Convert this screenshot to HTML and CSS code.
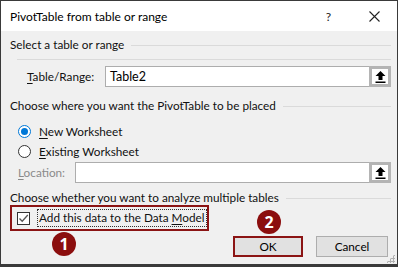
FILE: index.html
```html
<!DOCTYPE html>
<html lang="en">
<head>
    <meta charset="UTF-8">
    <title>PivotTable from table or range</title>
    <link rel="stylesheet" href="styles.css">
</head>
<body>
    <div class="dialog">
        <div class="titlebar">
            <span class="title">PivotTable from table or range</span>
            <span class="help">?</span>
            <svg class="close" width="11" height="11" viewBox="0 0 11 11">
                <path d="M0.5 0.5 L10.5 10.5 M10.5 0.5 L0.5 10.5" stroke="#222" stroke-width="1.1" fill="none"/>
            </svg>
        </div>

        <div class="content">
            <div class="group-head"><span>Select a table or range</span><i class="rule"></i></div>
            <div class="sep"></div>

            <div class="field-row range-row">
                <label class="field-label"><u>T</u>able/Range:</label>
                <div class="field">
                    <div class="input">Table2</div>
                    <div class="pick">
                        <svg width="11" height="12" viewBox="0 0 11 12"><path d="M5.5 0 L10.5 5 L7.5 5 L7.5 9 L3.5 9 L3.5 5 L0.5 5 Z M0.5 10.5 L10.5 10.5 L10.5 12 L0.5 12 Z" fill="#000"/></svg>
                    </div>
                </div>
            </div>

            <div class="group-head"><span>Choose where you want the PivotTable to be placed</span><i class="rule"></i></div>

            <div class="radio-row first">
                <span class="radio checked"></span>
                <span><u>N</u>ew Worksheet</span>
            </div>
            <div class="radio-row">
                <span class="radio"></span>
                <span><u>E</u>xisting Worksheet</span>
            </div>

            <div class="field-row loc-row">
                <label class="field-label disabled"><u>L</u>ocation:</label>
                <div class="field">
                    <div class="input"></div>
                    <div class="pick">
                        <svg width="11" height="12" viewBox="0 0 11 12"><path d="M5.5 0 L10.5 5 L7.5 5 L7.5 9 L3.5 9 L3.5 5 L0.5 5 Z M0.5 10.5 L10.5 10.5 L10.5 12 L0.5 12 Z" fill="#000"/></svg>
                    </div>
                </div>
            </div>

            <div class="group-head"><span>Choose whether you want to analyze multiple tables</span><i class="rule"></i></div>

            <div class="check-area">
                <div class="highlight check-box-wrap">
                    <span class="checkbox">
                        <svg width="11" height="11" viewBox="0 0 11 11"><path d="M1.5 5.5 L4.2 8.3 L9.8 2" stroke="#555" stroke-width="1.3" fill="none"/></svg>
                    </span>
                    <span class="focus-label">Add this data to the Data <u>M</u>odel</span>
                </div>
                <span class="badge badge-1">1</span>
            </div>

            <div class="buttons">
                <div class="btn ok">OK</div>
                <div class="btn">Cancel</div>
                <span class="badge badge-2">2</span>
            </div>
            <div class="grip"></div>
        </div>
    </div>
</body>
</html>
```

FILE: styles.css
```css
* {
    box-sizing: border-box;
}
body {
    margin: 0;
    background: #fff;
    font-family: 'Lato', 'Noto Sans', sans-serif;
    font-size: 11.75px;
    color: #111;
}
u {
    text-decoration: underline;
    text-underline-offset: 2px;
}
.dialog {
    width: 398px;
    height: 267px;
    border: 1px solid #3a3a3a;
    border-bottom-width: 3px;
    display: flex;
    flex-direction: column;
    background: #f0f0f0;
}
.titlebar {
    height: 30px;
    background: #fff;
    display: flex;
    align-items: center;
    padding-left: 9px;
}
.title {
    font-size: 12px;
    flex: 1;
    color: #000;
}
.help {
    font-size: 12px;
    margin-right: 38px;
    color: #222;
}
.close {
    margin-right: 17px;
}
.content {
    flex: 1;
    position: relative;
    padding: 6px 6px 0 9px;
    white-space: nowrap;
}
.group-head {
    display: flex;
    align-items: center;
    height: 16px;
    line-height: 16px;
}
.rule {
    flex: 1;
    height: 1px;
    background: #dadada;
    margin-left: 7px;
}
.sep {
    height: 1px;
    background: #dadada;
    margin: 6px 0 0 7px;
}
.field-row {
    display: flex;
    align-items: center;
    height: 21px;
}
.range-row {
    margin: 6px 0 11px 17px;
}
.loc-row {
    margin: 1px 0 7px 8px;
}
.field-label {
    width: 78px;
}
.loc-row .field-label {
    width: 57px;
}
.disabled {
    color: #8a8a8a;
}
.field {
    flex: 1;
    display: flex;
    height: 21px;
}
.input {
    flex: 1;
    background: #fff;
    border: 1px solid #adadad;
    border-right: none;
    padding-left: 4px;
    line-height: 19px;
    font-size: 12.5px;
    color: #000;
}
.pick {
    width: 22px;
    border: 3px solid #b4b4b4;
    background: #fff;
    display: flex;
    align-items: center;
    justify-content: center;
}
.radio-row {
    display: flex;
    align-items: center;
    gap: 8px;
    height: 20px;
    margin-left: 8px;
}
.radio-row.first {
    margin-top: 7px;
}
.radio {
    width: 13px;
    height: 13px;
    border: 1px solid #333;
    border-radius: 50%;
    background: #fff;
    position: relative;
}
.radio.checked {
    border-color: #0078d7;
}
.radio.checked::after {
    content: '';
    position: absolute;
    left: 2px;
    top: 2px;
    width: 7px;
    height: 7px;
    border-radius: 50%;
    background: #0078d7;
}
.check-area {
    position: relative;
    height: 30px;
}
.highlight {
    border: 2px solid #8b1414;
}
.check-box-wrap {
    display: inline-flex;
    align-items: center;
    gap: 7px;
    width: 199px;
    height: 26px;
    padding-left: 5px;
    margin-top: -1px;
}
.checkbox {
    width: 13px;
    height: 13px;
    border: 1px solid #333;
    background: #fff;
    display: flex;
    align-items: center;
    justify-content: center;
}
.focus-label {
    border: 1px dotted #333;
    padding: 0 1px;
    line-height: 16px;
}
.badge {
    position: absolute;
    width: 24px;
    height: 24px;
    border-radius: 50%;
    background: #8b0e0e;
    color: #fff;
    font-family: 'Noto Sans', sans-serif;
    font-size: 16px;
    font-weight: bold;
    text-align: center;
    line-height: 24px;
}
.badge-1 {
    left: 42px;
    top: 26px;
}
.buttons {
    position: relative;
    display: flex;
    justify-content: flex-end;
    gap: 13px;
    padding-right: 3px;
}
.btn {
    width: 72px;
    height: 21px;
    border: 1px solid #adadad;
    background: #e1e1e1;
    text-align: center;
    line-height: 19px;
    color: #000;
}
.btn.ok {
    width: 70px;
    border: 2px solid #8b1414;
    line-height: 17px;
}
.badge-2 {
    left: 247px;
    top: -26px;
}
.grip {
    position: absolute;
    right: 2px;
    bottom: 1px;
    width: 9px;
    height: 9px;
    background:
        radial-gradient(circle, #b0b0b0 1px, transparent 1.2px) 0 0 / 3px 3px;
    clip-path: polygon(100% 0, 100% 100%, 0 100%);
}
```
